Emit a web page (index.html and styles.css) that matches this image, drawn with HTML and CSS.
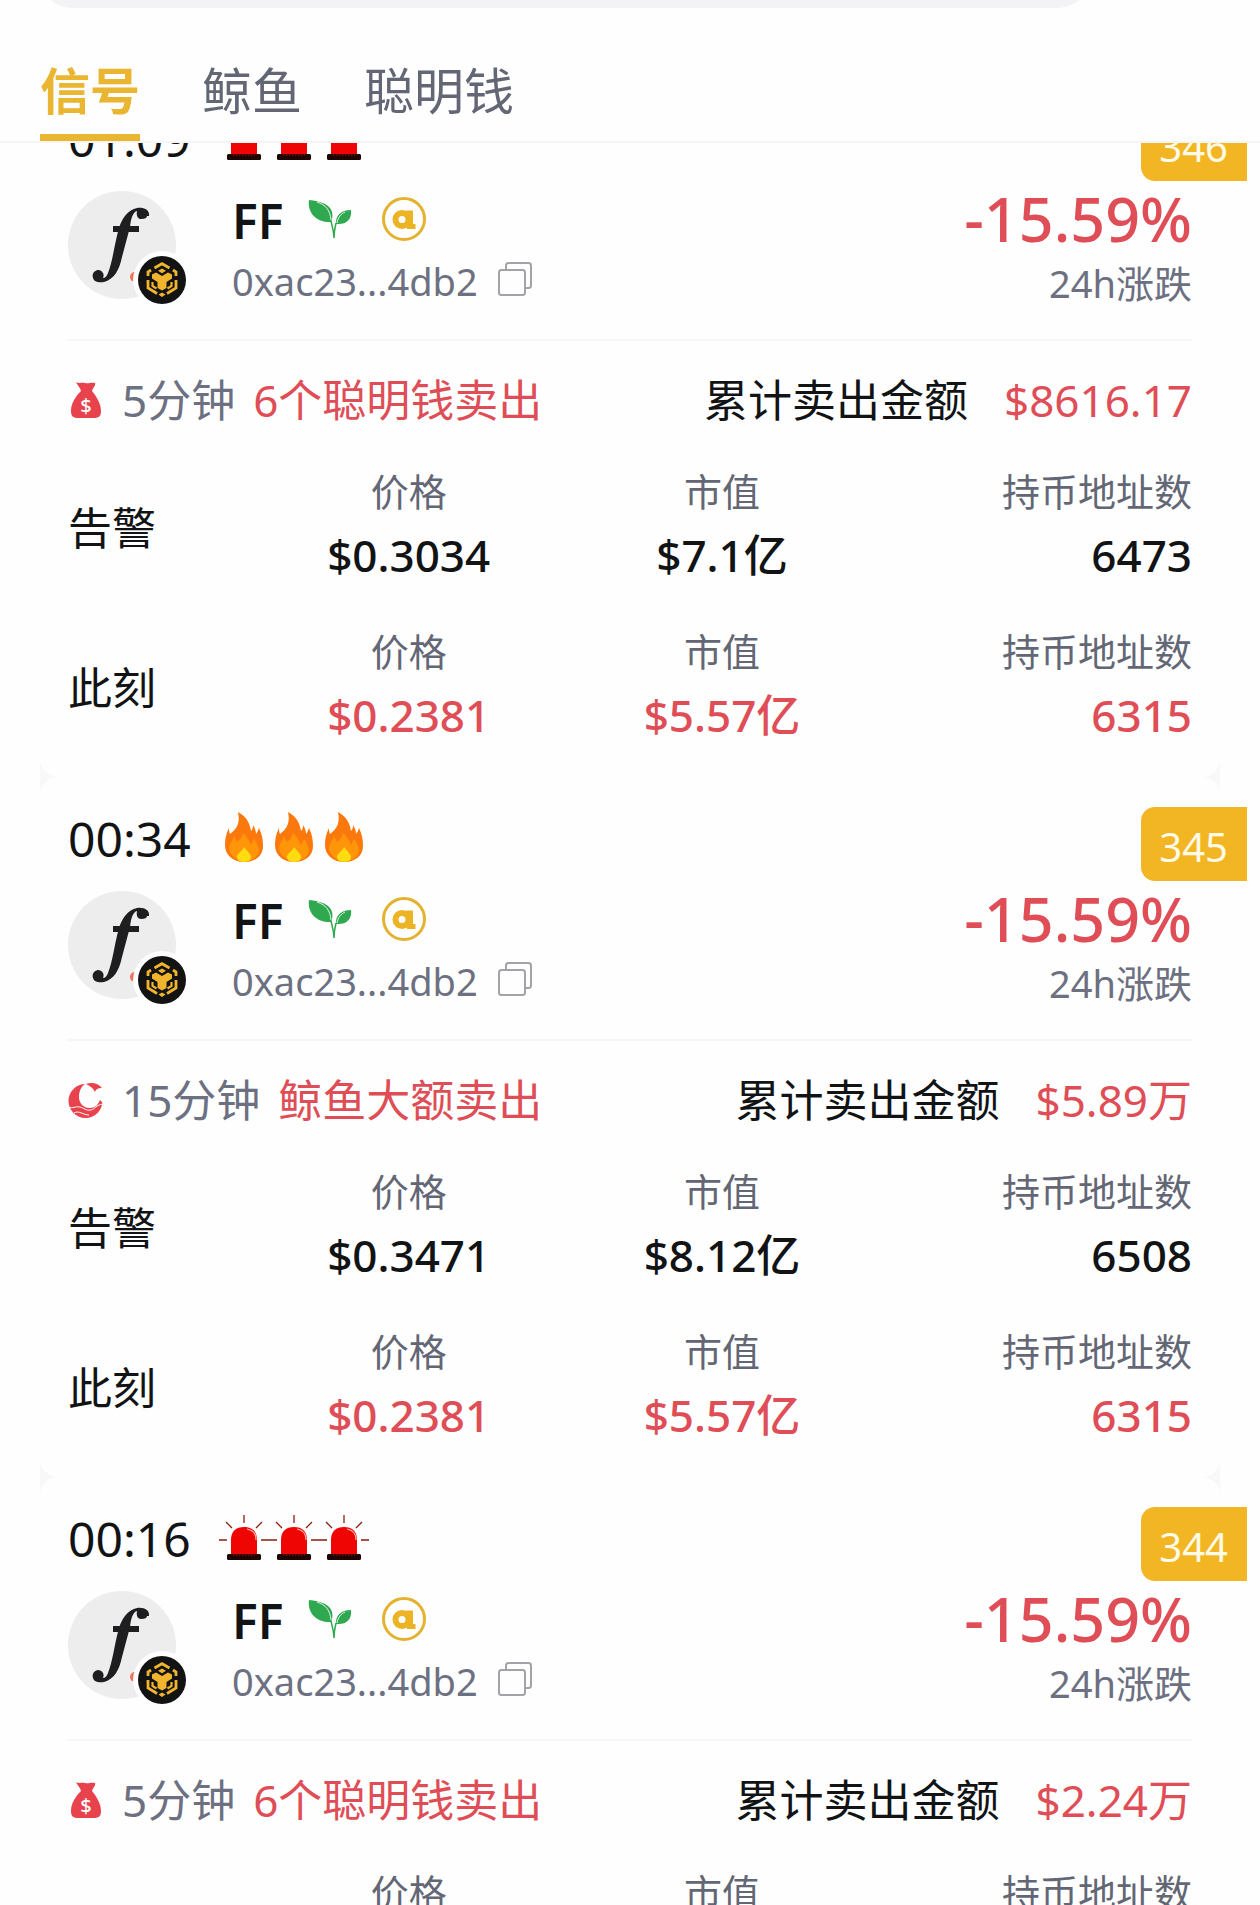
FILE: index.html
```html
<!DOCTYPE html>
<html lang="zh-CN">
<head>
<meta charset="utf-8">
<meta name="viewport" content="width=device-width, initial-scale=1">
<title>信号</title>
<link rel="stylesheet" href="styles.css">
</head>
<body>
<svg class="sprite" aria-hidden="true">
  <symbol id="siren" viewBox="0 0 50 50">
    <path d="M25 3v8M7 10l6 6M43 10l-6 6M0 28h8M42 28h8" stroke="#8c1d10" stroke-width="1.3" fill="none"/>
    <path d="M12 43V28C12 19 17 15 25 15s13 4 13 13v15z" fill="#f00505"/>
    <path d="M28 17c6 1 9 5 9 11" stroke="#ffb3a8" stroke-width="1.2" fill="none"/>
    <rect x="8" y="42" width="34" height="6" rx="1.5" fill="#1c0503"/>
    <path d="M14 43h22" stroke="#8a0a05" stroke-width="1.6" stroke-dasharray="1.5 1.5"/>
  </symbol>
  <symbol id="fire" viewBox="0 0 50 50">
    <path d="M19 0c9 5 12 12 13 19 2-2 2-4 2-6 2 3 3 6 3 9 1-1 2-3 3-6 3 6 4 12 4 18 0 10-8 16-19 16S6 43 6 33c0-6 1-11 4-17 0 2 0 4 1 6 8-6 10-12 8-22z" fill="#fb780c"/>
    <path d="M10 35c1-4 4-7 5-11l3 6c3-2 5-5 6-9 4 4 6 7 8 12l3-6c3 4 5 8 5 12-1 6-7 10-14 10S10 44 10 35z" fill="#ff960a"/>
    <path d="M25 35c3 4 8 8 7 11-1 3-4 4-7 4s-6-1-7-4c-1-4 5-6 7-11z" fill="#ffdc10"/>
  </symbol>
  <symbol id="token" viewBox="0 0 108 108">
    <circle cx="54" cy="54" r="54" fill="#ededee"/>
    <circle cx="67" cy="86" r="5" fill="#f0705c"/>
    <path d="M81 25c1-6-5-9-12-8-9 2-15 10-18 20-5 18-6 32-11 45-1 3-3 5-5 5 2-4-1-8-5-8-5 1-6 5-5 8 1 4 6 5 11 4 10-3 15-11 18-25l8-30c1-9 3-15 7-16-1 5 1 8 4 8 4 0 6-1 6-3z" fill="#1e1e20"/>
    <path d="M45 35h26v6H45z" fill="#1e1e20"/>
  </symbol>
  <symbol id="chain" viewBox="0 0 58 58">
    <circle cx="29" cy="29" r="29" fill="#fefefe"/>
    <circle cx="29" cy="29" r="24" fill="#131313"/>
    <g fill="none" stroke="#f0b52c" stroke-width="2.8">
      <path d="M21.500 17l7.500-4.300 7.500 4.300M18 19l-3 2v4M40 19l3 2v4M15 29v8l9 5.500M43 29v8l-9 5.500"/>
      <path d="M19.500 31v4l4 2.500M38.500 31v4l-4 2.500" stroke-width="2.200"/>
    </g>
    <path d="M29 17.500l4 2.300-4 2.400-4-2.400zM29 41.500l3.500 2-3.500 2.500-3.500-2.500zM19 23.500l4-2 6 3.400 6-3.400 4 2v4L33.500 31v6L29 39.500 24.500 37v-6L19 27.500z" fill="#f0b52c"/>
  </symbol>
  <symbol id="leaf" viewBox="0 0 44 40">
    <path d="M1 1c11 1 21 4 23 12 1 4 0 8-1 10C10 24-1 15 1 1z" fill="#2fa84f"/>
    <path d="M43 11c1 8-3 15-15 14-1-8 5-14 15-14z" fill="#2fa84f"/>
    <path d="M9 3c9 3 13 8 14 18M29 24c1-6 4-9 8-11" fill="none" stroke="#e6f6ea" stroke-width="1"/>
    <path d="M23 22c1 5 3 10 3 17M28 24c-1 4-2 9-2 15" fill="none" stroke="#2fa84f" stroke-width="1.500"/>
  </symbol>
  <symbol id="alpha" viewBox="0 0 44 44">
    <circle cx="22" cy="22" r="20.500" fill="none" stroke="#e5b22f" stroke-width="3"/>
    <circle cx="20" cy="22.500" r="6.500" fill="none" stroke="#ecb424" stroke-width="6"/>
    <path d="M24 13.500h7V27h2.500v5H25z" fill="#ecb424"/>
  </symbol>
  <symbol id="copy" viewBox="0 0 34 34">
    <path d="M8 7V3.500C8 2 9 1 10.500 1h20C32 1 33 2 33 3.500v20c0 1.500-1 2.500-2.500 2.500H27" fill="none" stroke="#a2a3a6" stroke-width="2"/>
    <rect x="1" y="8" width="26" height="25" rx="2.500" fill="none" stroke="#a2a3a6" stroke-width="2"/>
  </symbol>
  <symbol id="bag" viewBox="0 0 36 38">
    <path d="M8 1c4 2 5 0 9 1 3 1 6-1 10 0 1 3-2 4-3 8 4 5 9 12 9 20 0 5-2 7-7 7H10c-5 0-7-2-7-7 0-8 5-15 10-20-1-4-4-6-5-9z" fill="#e8424d"/>
    <text x="18" y="32" text-anchor="middle" class="bag-mark">$</text>
  </symbol>
  <symbol id="whale" viewBox="0 0 36 38">
    <circle cx="17.500" cy="20" r="17" fill="#e8424d"/>
    <path d="M19 2h17v21l-4-4c-2 5-5 8-10 8-7 0-11-5-11-11 0-7 3-12 8-14z" fill="#fefefe"/>
    <path d="M18 3c6-2 12-1 16 4-4 0-6 1-7 4-2-4-5-6-9-8z" fill="#e8424d"/>
    <path d="M0 26c5 2 7-1 12 0 4 1 6 4 11 3 4-1 5-5 12-6M6 32c5-3 9 2 15 2" fill="none" stroke="#fefefe" stroke-width="1"/>
  </symbol>
</svg>

<div class="app">
  <header class="header">
    <div class="search"></div>
    <nav class="tabs">
      <a class="tab tab-active" href="#">信号</a>
      <a class="tab" href="#">鲸鱼</a>
      <a class="tab" href="#">聪明钱</a>
    </nav>
  </header>

  <main class="feed">
    <div class="list">
      <article class="card">
        <span class="number">346</span>
        <div class="when"><time>01:09</time><span class="level"><svg><use href="#siren"/></svg><svg><use href="#siren"/></svg><svg><use href="#siren"/></svg></span></div>
        <div class="token">
          <div class="avatar"><svg class="avatar-main"><use href="#token"/></svg><svg class="avatar-chain"><use href="#chain"/></svg></div>
          <div class="identity">
            <div class="name"><strong>FF</strong><svg class="icon-leaf"><use href="#leaf"/></svg><svg class="icon-alpha"><use href="#alpha"/></svg></div>
            <div class="address"><span>0xac23...4db2</span><button type="button" class="copy"><svg><use href="#copy"/></svg></button></div>
          </div>
          <div class="change"><span class="percent">-15.59%</span><span class="period">24h涨跌</span></div>
        </div>
        <div class="signal">
          <svg class="signal-icon"><use href="#bag"/></svg>
          <span class="span">5分钟</span><span class="down">6个聪明钱卖出</span>
          <span class="total">累计卖出金额</span><span class="down">$8616.17</span>
        </div>
        <table class="stats">
          <tr><th scope="row">告警</th><td><span class="key">价格</span><span class="value">$0.3034</span></td><td><span class="key">市值</span><span class="value">$7.1亿</span></td><td><span class="key">持币地址数</span><span class="value">6473</span></td></tr>
          <tr class="now"><th scope="row">此刻</th><td><span class="key">价格</span><span class="value">$0.2381</span></td><td><span class="key">市值</span><span class="value">$5.57亿</span></td><td><span class="key">持币地址数</span><span class="value">6315</span></td></tr>
        </table>
      </article>

      <article class="card">
        <span class="number">345</span>
        <div class="when"><time>00:34</time><span class="level"><svg><use href="#fire"/></svg><svg><use href="#fire"/></svg><svg><use href="#fire"/></svg></span></div>
        <div class="token">
          <div class="avatar"><svg class="avatar-main"><use href="#token"/></svg><svg class="avatar-chain"><use href="#chain"/></svg></div>
          <div class="identity">
            <div class="name"><strong>FF</strong><svg class="icon-leaf"><use href="#leaf"/></svg><svg class="icon-alpha"><use href="#alpha"/></svg></div>
            <div class="address"><span>0xac23...4db2</span><button type="button" class="copy"><svg><use href="#copy"/></svg></button></div>
          </div>
          <div class="change"><span class="percent">-15.59%</span><span class="period">24h涨跌</span></div>
        </div>
        <div class="signal">
          <svg class="signal-icon"><use href="#whale"/></svg>
          <span class="span">15分钟</span><span class="down">鲸鱼大额卖出</span>
          <span class="total">累计卖出金额</span><span class="down">$5.89万</span>
        </div>
        <table class="stats">
          <tr><th scope="row">告警</th><td><span class="key">价格</span><span class="value">$0.3471</span></td><td><span class="key">市值</span><span class="value">$8.12亿</span></td><td><span class="key">持币地址数</span><span class="value">6508</span></td></tr>
          <tr class="now"><th scope="row">此刻</th><td><span class="key">价格</span><span class="value">$0.2381</span></td><td><span class="key">市值</span><span class="value">$5.57亿</span></td><td><span class="key">持币地址数</span><span class="value">6315</span></td></tr>
        </table>
      </article>

      <article class="card">
        <span class="number">344</span>
        <div class="when"><time>00:16</time><span class="level"><svg><use href="#siren"/></svg><svg><use href="#siren"/></svg><svg><use href="#siren"/></svg></span></div>
        <div class="token">
          <div class="avatar"><svg class="avatar-main"><use href="#token"/></svg><svg class="avatar-chain"><use href="#chain"/></svg></div>
          <div class="identity">
            <div class="name"><strong>FF</strong><svg class="icon-leaf"><use href="#leaf"/></svg><svg class="icon-alpha"><use href="#alpha"/></svg></div>
            <div class="address"><span>0xac23...4db2</span><button type="button" class="copy"><svg><use href="#copy"/></svg></button></div>
          </div>
          <div class="change"><span class="percent">-15.59%</span><span class="period">24h涨跌</span></div>
        </div>
        <div class="signal">
          <svg class="signal-icon"><use href="#bag"/></svg>
          <span class="span">5分钟</span><span class="down">6个聪明钱卖出</span>
          <span class="total">累计卖出金额</span><span class="down">$2.24万</span>
        </div>
        <table class="stats">
          <tr><th scope="row"></th><td><span class="key">价格</span><span class="value"></span></td><td><span class="key">市值</span><span class="value"></span></td><td><span class="key">持币地址数</span><span class="value"></span></td></tr>
        </table>
      </article>
    </div>
  </main>
</div>
</body>
</html>
```
FILE: styles.css
```css
* {
  box-sizing: border-box;
}

:root {
  --ink: #111315;
  --muted: #6c7080;
  --red: #df4e57;
  --gold: #eab530;
  --paper: #fefefe;
}

body {
  margin: 0;
  background: var(--paper);
  color: var(--ink);
  font-family: "Noto Sans", "Noto Sans CJK SC", sans-serif;
  font-size: 44px;
  line-height: 64px;
}

svg {
  display: block;
  flex: none;
}

.sprite {
  position: absolute;
  width: 0;
  height: 0;
}

.app {
  display: flex;
  flex-direction: column;
  height: 100vh;
  overflow: hidden;
}

/* Header */
.header {
  flex: none;
  background: var(--paper);
  border-bottom: 2px solid #f5f5f6;
  overflow: hidden;
}

.search {
  height: 64px;
  margin: -56px 170px 46px 40px;
  border-radius: 32px;
  background: #f3f3f5;
}

.tabs {
  display: flex;
  gap: 62px;
  padding: 0 40px;
}

.tab {
  padding-bottom: 6px;
  border-bottom: 7px solid transparent;
  color: #636775;
  font-size: 50px;
  line-height: 74px;
  text-decoration: none;
}

.tab-active {
  border-color: var(--gold);
  color: var(--gold);
  font-weight: 600;
}

/* Feed, scrolled part of the way through its first card */
.feed {
  flex: 1;
  min-height: 0;
  overflow: hidden;
}

.list {
  margin: -66px 40px 0;
  background: #f8f8f9;
}

.card {
  position: relative;
  padding: 35px 28px 13px;
  border-radius: 18px;
  background: var(--paper);
}

.number {
  position: absolute;
  top: 30px;
  right: -27px;
  padding: 8px 19px 2px 18px;
  border-radius: 14px 0 0 14px;
  background: #f2b624;
  color: #fffbe6;
  font-size: 40px;
}

.when {
  display: flex;
  align-items: center;
  gap: 28px;
  height: 50px;
  font-size: 48px;
}

.when time {
  padding-top: 4px;
}

.level {
  display: flex;
}

.level svg {
  width: 50px;
  height: 50px;
}

.token {
  display: flex;
  margin-top: 29px;
  padding-bottom: 26px;
  border-bottom: 2px solid #f7f7f8;
}

.avatar {
  position: relative;
  width: 108px;
  height: 108px;
  margin-right: 56px;
}

.avatar-main {
  width: 108px;
  height: 108px;
}

.avatar-chain {
  position: absolute;
  right: -15px;
  bottom: -10px;
  width: 58px;
  height: 58px;
}

.name,
.address {
  display: flex;
  align-items: center;
  line-height: 60px;
}

.name {
  font-size: 48px;
}

.name strong {
  font-weight: 600;
}

.icon-leaf {
  width: 44px;
  height: 40px;
  margin: 0 30px 4px 24px;
}

.icon-alpha {
  width: 44px;
  height: 44px;
  margin-bottom: 4px;
}

.address {
  gap: 20px;
  color: var(--muted);
  font-size: 38px;
}

.copy {
  padding: 0 0 4px;
  border: 0;
  background: none;
}

.copy svg {
  width: 34px;
  height: 34px;
}

.change {
  display: flex;
  flex-direction: column;
  gap: 6px;
  margin-left: auto;
  text-align: right;
}

.percent {
  color: var(--red);
  font-size: 61px;
  font-weight: 500;
  line-height: 56px;
}

.period {
  color: var(--muted);
  font-size: 38px;
  line-height: 60px;
}

.signal {
  display: flex;
  align-items: center;
  padding: 27px 0 12px;
}

.signal-icon {
  width: 36px;
  height: 38px;
  margin-right: 18px;
}

.bag-mark {
  fill: #fefefe;
  font-size: 20px;
  font-weight: 500;
}

.span {
  margin-right: 18px;
  color: var(--muted);
}

.down {
  color: var(--red);
}

.total {
  margin: 0 36px 0 auto;
}

.stats {
  width: 100%;
  border-collapse: collapse;
  table-layout: fixed;
}

.stats tr {
  height: 160px;
}

.stats th,
.stats td {
  padding: 0;
  text-align: center;
}

.stats th {
  width: 184px;
  padding-top: 8px;
  font-weight: 400;
  text-align: left;
}

.stats td:last-child {
  text-align: right;
}

.key,
.value {
  display: block;
}

.key {
  color: #636775;
  font-size: 38px;
  line-height: 60px;
}

.value {
  min-height: 64px;
  padding-top: 2px;
  font-weight: 500;
}

.now .value {
  color: var(--red);
}
```
